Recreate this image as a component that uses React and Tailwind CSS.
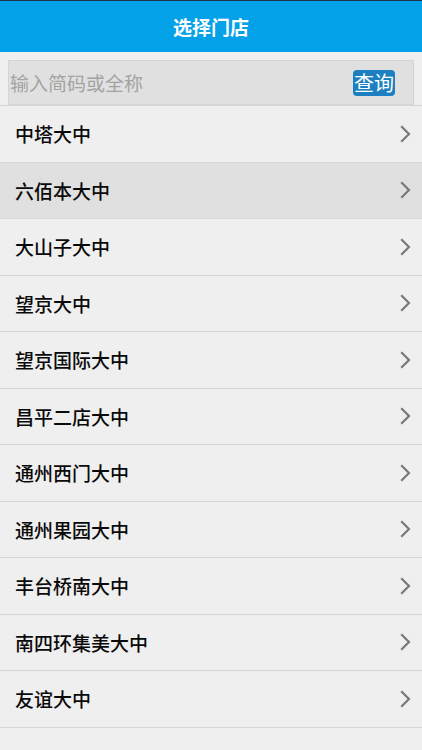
import React from "react";

const stores = [
  "中塔大中",
  "六佰本大中",
  "大山子大中",
  "望京大中",
  "望京国际大中",
  "昌平二店大中",
  "通州西门大中",
  "通州果园大中",
  "丰台桥南大中",
  "南四环集美大中",
  "友谊大中",
];

function Chevron() {
  return (
    <svg width="12" height="18" viewBox="0 0 12 18" className="shrink-0">
      <path d="M3 2 L10 9 L3 16" fill="none" stroke="#787878" strokeWidth="2.2" strokeLinecap="square" />
    </svg>
  );
}

export default function App() {
  return (
    <div
      className="w-[422px] h-[750px] overflow-hidden bg-[#efefef] flex flex-col"
      style={{ fontFamily: '"Noto Sans CJK SC", "Noto Sans", sans-serif' }}
    >
      <div className="h-[1px] bg-[#17324a]" />
      <div className="h-[51px] bg-[#03a1e8] flex items-center justify-center">
        <span className="text-white text-[19px] font-bold leading-none">选择门店</span>
      </div>
      <div className="h-[54px] border-b border-[#d4d4d4] px-[8px] pt-[8px]">
        <div className="h-[45px] bg-[#e0e0e0] border border-[#d5d5d5] flex items-center pl-[1px] pr-[18px]">
          <span className="flex-1 text-[19px] text-[#a3a3a3] leading-none">输入简码或全称</span>
          <span className="bg-[#1b7fc1] text-white text-[20px] leading-none rounded-[4px] px-[1px] h-[26px] w-[42px] flex items-center justify-center">
            查询
          </span>
        </div>
      </div>
      {stores.map((s, i) => (
        <div
          key={s}
          className={`h-[56.5px] shrink-0 border-b border-[#d6d6d6] flex items-center pl-[15px] pr-[11px] ${
            i === 1 ? "bg-[#e0e0e0]" : "bg-[#efefef]"
          }`}
        >
          <span className="flex-1 text-[19px] font-medium text-[#0a0a0a] leading-none">{s}</span>
          <Chevron />
        </div>
      ))}
    </div>
  );
}
